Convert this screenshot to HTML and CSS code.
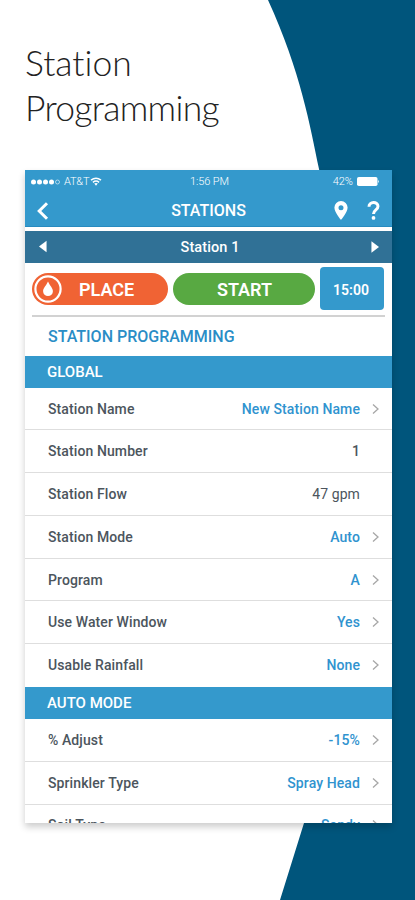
FILE: index.html
```html
<!DOCTYPE html>
<html lang="en">
<head>
<meta charset="utf-8">
<title>Station Programming</title>
<link rel="stylesheet" href="styles.css">
</head>
<body>
<svg class="backdrop" viewBox="0 0 415 900" aria-hidden="true"><path d="M268 0C301 72 310 126 319 169C363 400 362 637 304 823L280 900H415V0Z" fill="#00557c"/></svg>
<main class="page">
<h1 class="headline"><span class="line-one">Station</span><br>Programming</h1>
<section class="phone">
<header class="top">
<div class="status">
<div class="carrier"><svg width="31" height="8" viewBox="0 0 31 8"><g fill="#fff"><circle cx="3.5" cy="4" r="2.5"/><circle cx="9.500" cy="4" r="2.5"/><circle cx="15.500" cy="4" r="2.5"/><circle cx="21.500" cy="4" r="2.5"/></g><circle cx="27.500" cy="4" r="2" fill="none" stroke="#cde6f3" stroke-width=".8"/></svg><span class="network">AT&amp;T</span><svg class="wifi" width="12" height="9" viewBox="0 0 12 9"><path d="M1 3.2Q6-.8 11 3.2M2.9 5.3Q6 2.9 9.1 5.3" fill="none" stroke="#fff" stroke-width="1.5"/><path d="M4.2 6.6Q6 5.3 7.8 6.6L6 8.8Z" fill="#fff"/></svg></div>
<span class="clock">1:56 PM</span>
<div class="battery"><span>42%</span><svg width="23" height="9" viewBox="0 0 23 9"><rect width="20.5" height="9" rx="1.8" fill="#fff"/><path d="M21.2 2.8Q23 4.5 21.2 6.2Z" fill="#fff"/></svg></div>
</div>
<div class="nav">
<svg class="back" width="12" height="18" viewBox="0 0 12 18"><path d="M10 1.2 2.2 9 10 16.8" fill="none" stroke="#fff" stroke-width="3"/></svg>
<span class="nav-title">STATIONS</span>
<div class="tools"><svg width="14" height="19" viewBox="0 0 14 19"><path fill="#fff" fill-rule="evenodd" d="M7 0a6.6 6.6 0 0 1 6.6 6.6C13.600 11.500 7 19 7 19S.4 11.500.4 6.600A6.600 6.600 0 0 1 7 0Zm0 4.200a2.500 2.500 0 1 0 0 5 2.500 2.500 0 0 0 0-5Z"/></svg><svg width="13" height="19" viewBox="0 0 13 19"><path d="M2 5.700C2 .3 11 .3 11 5.300 11 9 6.500 8.700 6.500 13" fill="none" stroke="#fff" stroke-width="3"/><circle cx="6.500" cy="16.900" r="1.900" fill="#fff"/></svg></div>
</div>
</header>
<div class="picker"><svg width="8" height="13" viewBox="0 0 9 14"><path d="M8.500.5v13L0 7Z" fill="#fff"/></svg><span>Station 1</span><svg width="8" height="14" viewBox="0 0 9 14"><path d="M.5.500v13L9 7Z" fill="#fff"/></svg></div>
<div class="actions">
<div class="pill place"><svg width="28" height="28" viewBox="0 0 28 28"><circle cx="14" cy="14" r="12.600" fill="none" stroke="#fff" stroke-width="2.200"/><path d="M14 6.500C16 11 18.900 13 18.900 16.200a4.900 4.900 0 0 1-9.800 0C9.100 13 12 11 14 6.500Z" fill="#fff"/></svg><span>PLACE</span></div>
<div class="pill start"><span>START</span></div>
<div class="timer"><span>15:00</span></div>
</div>
<h2 class="section">STATION PROGRAMMING</h2>
<h3 class="band">GLOBAL</h3>
<div class="row"><span class="label">Station Name</span><span class="value">New Station Name</span><svg class="chev" viewBox="0 0 7 10"><path d="M1 .5 6 5 1 9.500"/></svg></div>
<div class="row"><span class="label">Station Number</span><span class="value dark bold">1</span></div>
<div class="row"><span class="label">Station Flow</span><span class="value dark">47 gpm</span></div>
<div class="row"><span class="label">Station Mode</span><span class="value">Auto</span><svg class="chev" viewBox="0 0 7 10"><path d="M1 .5 6 5 1 9.500"/></svg></div>
<div class="row"><span class="label">Program</span><span class="value">A</span><svg class="chev" viewBox="0 0 7 10"><path d="M1 .5 6 5 1 9.500"/></svg></div>
<div class="row"><span class="label">Use Water Window</span><span class="value">Yes</span><svg class="chev" viewBox="0 0 7 10"><path d="M1 .5 6 5 1 9.500"/></svg></div>
<div class="row last"><span class="label">Usable Rainfall</span><span class="value">None</span><svg class="chev" viewBox="0 0 7 10"><path d="M1 .5 6 5 1 9.500"/></svg></div>
<h3 class="band">AUTO MODE</h3>
<div class="row"><span class="label">% Adjust</span><span class="value">-15%</span><svg class="chev" viewBox="0 0 7 10"><path d="M1 .5 6 5 1 9.500"/></svg></div>
<div class="row tall"><span class="label">Sprinkler Type</span><span class="value">Spray Head</span><svg class="chev" viewBox="0 0 7 10"><path d="M1 .5 6 5 1 9.500"/></svg></div>
<div class="row clipped"><span class="label">Soil Type</span><span class="value">Sandy</span><svg class="chev" viewBox="0 0 7 10"><path d="M1 .5 6 5 1 9.500"/></svg></div>
</section>
</main>
</body>
</html>
```
FILE: styles.css
```css
* { box-sizing: border-box; }
html, body { margin: 0; height: 900px; overflow: hidden; }
body { background: #fff; font-family: Roboto, "Liberation Sans", sans-serif; }
svg { display: block; flex: none; }
.backdrop { position: absolute; left: 0; top: 0; width: 415px; height: 900px; }
.page { position: relative; padding: 40px 23px 0 25px; }
.headline { margin: 0; height: 129.500px; font: 300 35.500px/45px Lato, sans-serif; letter-spacing: -.7px; font-variant-ligatures: none; color: #222; white-space: nowrap; }
.line-one { letter-spacing: 0; }
.phone { width: 367px; height: 653.500px; overflow: hidden; background: #fff; box-shadow: 0 4px 7px rgba(0, 0, 0, .2); }
.top { height: 57.500px; background: #3499cc; color: #fff; border-bottom: 1px solid #278bc0; }
.status { display: grid; grid-template-columns: 1fr auto 1fr; align-items: center; height: 24px; padding: 0 12px 0 5px; font-size: 11px; font-weight: 300; }
.carrier, .battery { display: flex; align-items: center; }
.network { margin-left: 3px; letter-spacing: -.2px; }
.wifi { margin-left: 1px; }
.clock { margin-left: 9px; letter-spacing: -.1px; }
.battery { justify-content: flex-end; gap: 4px; }
.nav { display: grid; grid-template-columns: 1fr auto 1fr; align-items: center; height: 34px; padding: 0 12px; }
.nav-title { font-size: 16px; font-weight: 500; }
.tools { display: flex; justify-content: flex-end; gap: 19px; }
.picker { display: flex; justify-content: space-between; align-items: center; height: 31.500px; margin-top: 4px; padding: 0 13px 0 14px; background: #307196; color: #fff; font-size: 14.500px; font-weight: 500; }
.picker span { padding: 1px 0 0 2px; letter-spacing: .1px; }
.actions { display: flex; align-items: center; height: 54px; margin: 0 7px; padding-right: 1px; border-bottom: 2px solid #d2d2d2; }
.pill { display: flex; align-items: center; height: 32px; border-radius: 16px; color: #fff; font-size: 18px; font-weight: 600; }
.pill span { padding-top: 1px; }
.place { width: 136px; padding-left: 2px; gap: 17px; background: #f06334; }
.start { width: 142px; margin-left: 5px; padding-left: 1px; justify-content: center; background: #58a942; }
.timer { display: flex; align-items: center; justify-content: center; width: 64px; height: 43px; margin-left: auto; border-radius: 4px; background: #3499cc; color: #fff; font-size: 14px; font-weight: 600; }
.timer span { padding: 3px 2px 0 0; }
.section { display: flex; align-items: center; height: 39px; margin: 0; padding-left: 23px; color: #2a8dc6; font-size: 16px; font-weight: 500; }
.band { display: flex; align-items: center; height: 32px; margin: 0; padding-left: 22px; background: #3499cc; color: #fff; font-size: 15px; font-weight: 500; }
.row { display: flex; align-items: center; height: 42.750px; padding: .4px 13px 0 23px; border-bottom: 1px solid #dedede; font-size: 14px; font-weight: 500; letter-spacing: .1px; }
.row.last { border-bottom-color: transparent; }
.row.tall { height: 43.250px; padding-top: 0; }
.row.clipped { padding-top: 0; height: 42px; }
.label { color: #4c555d; }
.value { margin-left: auto; margin-right: 12px; color: #3093cf; }
.value:last-child { margin-right: 19px; }
.value.dark { color: #4c555d; font-weight: 400; }
.value.bold { font-weight: 500; }
.chev { width: 7px; height: 10px; fill: none; stroke: #a7a7a7; stroke-width: 1.300; }
```
